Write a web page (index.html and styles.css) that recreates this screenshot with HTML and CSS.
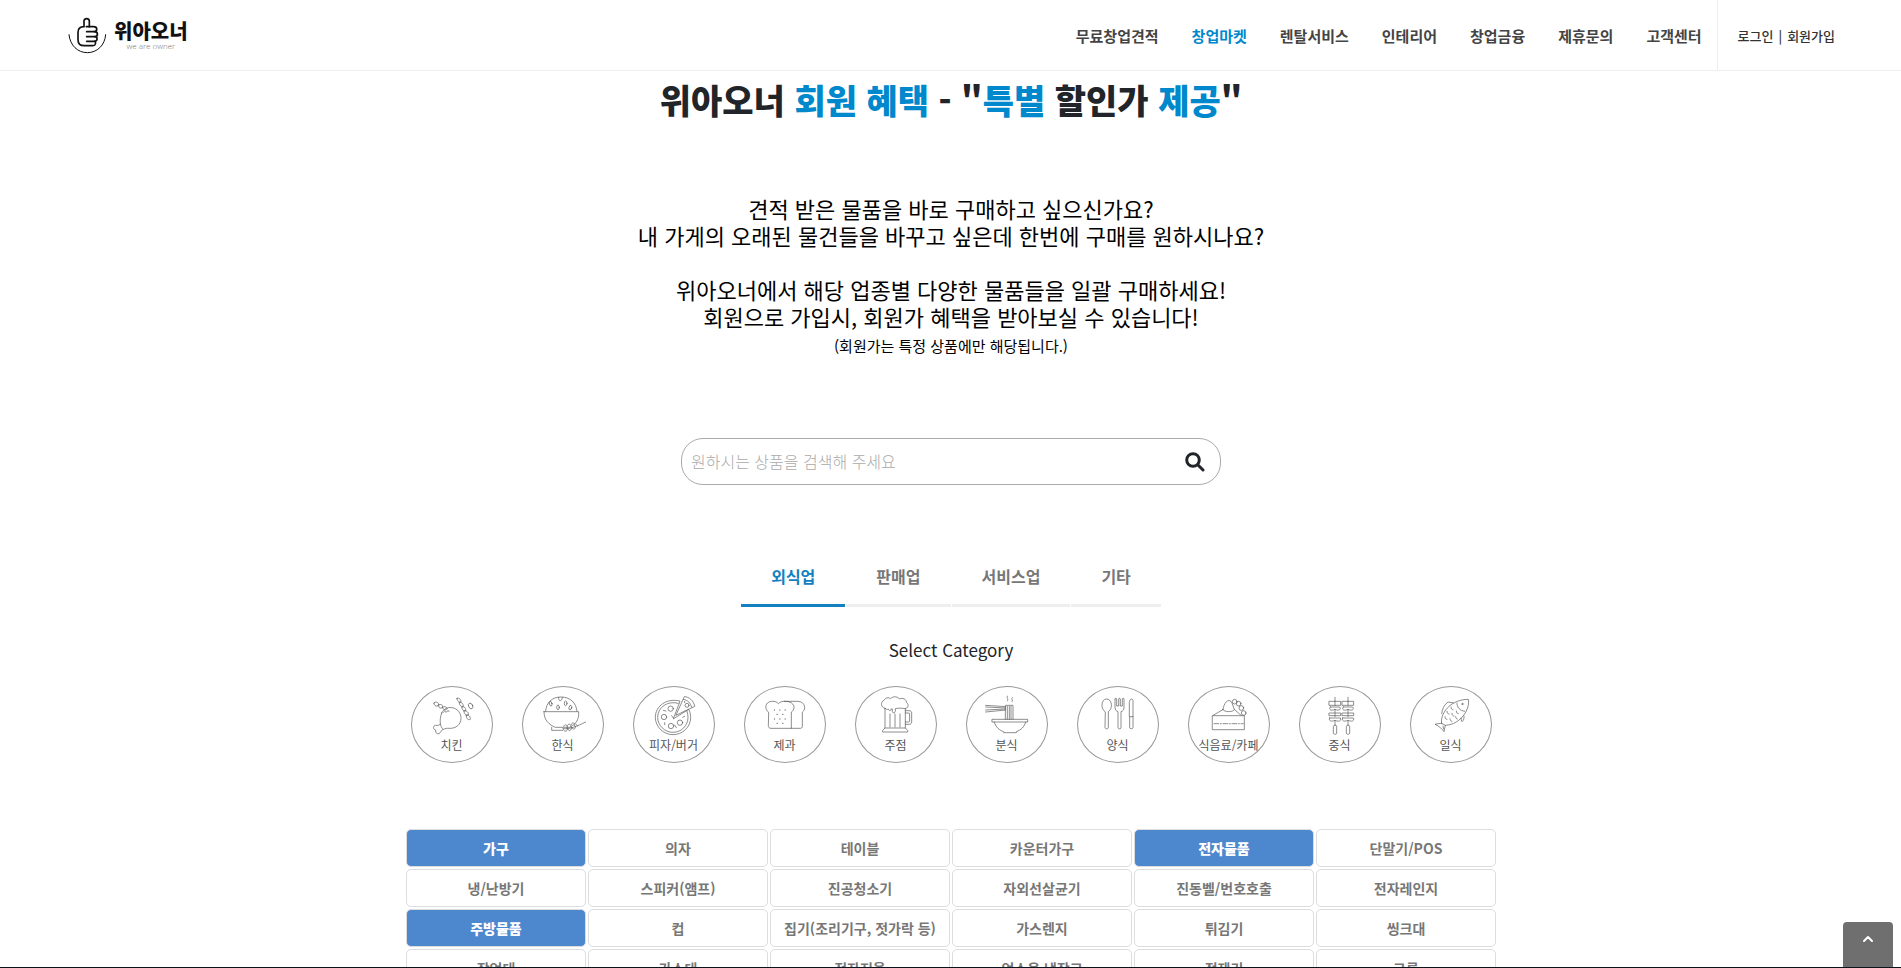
FILE: index.html
```html
<!DOCTYPE html>
<html lang="ko">
<head>
  <meta charset="UTF-8">
  <meta name="viewport" content="width=device-width, initial-scale=1.0">
  <title>위아오너 - 창업마켓</title>
  <link rel="stylesheet" href="styles.css">
</head>
<body>
  <header class="header">
    <a class="logo" href="#">
      <svg class="logo-mark" viewBox="55 50 117 111" aria-hidden="true">
        <path class="arc" d="M58 103c3 32 26 54 55 54s53-22 55-54"/>
        <path d="M103 79V63c0-11 16-11 16 0v16h13c12 0 12 14 2 15 12 0 12 14 2 15 9 1 8 13-1 14 5 3 3 13-5 13h-26c-13 0-19-8-19-18V96c0-11 6-17 18-17z"/>
        <path d="M134 94h-23M136 109h-25M135 123h-24M119 79h-9"/>
      </svg>
      <span class="logo-text">
        <strong>위아오너</strong>
        <small>we are owner</small>
      </span>
    </a>
    <nav class="nav">
      <a href="#">무료창업견적</a>
      <a class="active" href="#">창업마켓</a>
      <a href="#">렌탈서비스</a>
      <a href="#">인테리어</a>
      <a href="#">창업금융</a>
      <a href="#">제휴문의</a>
      <a href="#">고객센터</a>
    </nav>
    <div class="user-menu">
      <a href="#">로그인</a><span>|</span><a href="#">회원가입</a>
    </div>
  </header>

  <main class="main">
    <h1 class="title">위아오너 <em>회원 혜택</em> - "<em>특별</em> 할인가 <em>제공</em>"</h1>

    <div class="intro">
      <p>견적 받은 물품을 바로 구매하고 싶으신가요?<br>내 가게의 오래된 물건들을 바꾸고 싶은데 한번에 구매를 원하시나요?</p>
      <p>위아오너에서 해당 업종별 다양한 물품들을 일괄 구매하세요!<br>회원으로 가입시, 회원가 혜택을 받아보실 수 있습니다!</p>
      <p class="note">(회원가는 특정 상품에만 해당됩니다.)</p>
    </div>

    <form class="search">
      <input type="text" placeholder="원하시는 상품을 검색해 주세요" aria-label="상품 검색">
      <button type="button" aria-label="검색">
        <svg viewBox="0 0 20 20" aria-hidden="true"><circle cx="8" cy="8" r="6.3"/><path d="M13 13l5 5"/></svg>
      </button>
    </form>

    <div class="tabs">
      <button class="tab active" type="button">외식업</button>
      <button class="tab" type="button">판매업</button>
      <button class="tab" type="button">서비스업</button>
      <button class="tab" type="button">기타</button>
    </div>

    <h2 class="subtitle">Select Category</h2>

    <div class="categories">
      <a class="category" href="#">
        <!-- 닭다리 -->
        <svg viewBox="-69 0 138 126" aria-hidden="true">
          <path d="M-31 57C-24 44-14 39 0 41c16 2 27 16 27 32C27 92 11 104-8 103c-8 0-12-1-18 4-10-9-13-27-5-50z"/>
          <path d="M-35 90c-6 6-9 4-14 4-9 1-8 13 0 14-1 9 4 13 10 11 6-3 4-9 12-13"/>
          <path d="M-54 27c5-6 14-2 14 5-3 8-15 5-14-5zM-40 33c6-4 12-1 12 6-4 7-14 3-12-6zM-28 40c6-5 12-1 14 4-6 6-14 4-14-4zM-26 55c3-6 9-5 8 0M-15 53c1-5 6-5 6 0"/>
          <path d="M15 13c6-3 12 3 12 11-7 2-12-4-12-11zM22 26c7-3 12 3 12 11-8 2-12-4-12-11zM30 39c7-3 12 3 11 11-7 2-12-4-11-11zM36 51c7-3 14 3 13 12-8 2-13-4-13-12zM43 64c7-3 13 4 12 12-8 4-13-5-12-12z"/>
          <ellipse cx="56" cy="36" rx="6" ry="9" transform="rotate(-25 56 36)"/>
        </svg>
        <span>치킨</span>
      </a>
      <a class="category" href="#">
        <!-- 밥그릇 -->
        <svg viewBox="-69 0 138 126" aria-hidden="true">
          <path d="M-57 53H47c2 26-11 39-27 47h-43c-19-8-34-21-34-47zM-52 52c1-26 19-43 46-43s46 17 48 43M-34 100v9h33"/>
          <path d="M-13 10c-2 14 11 14 11 0"/>
          <ellipse cx="-37" cy="29" rx="4" ry="7" transform="rotate(-15 -37 29)"/>
          <ellipse cx="-15" cy="40" rx="4" ry="7"/>
          <ellipse cx="8" cy="28" rx="4" ry="7"/>
          <ellipse cx="22" cy="41" rx="4" ry="7" transform="rotate(15 22 41)"/>
          <path d="M0 104c20 2 40-6 68-20M2 97c3-8 12-6 11 5M13 96c2-9 12-7 11 3M25 92c2-9 11-7 10 3M1 105c1 9 12 10 12-1M14 103c1 10 12 9 11-1M26 100c3 9 13 6 11-3M38 90l6 6"/>
        </svg>
        <span>한식</span>
      </a>
      <a class="category" href="#">
        <!-- 피자 -->
        <svg viewBox="-69 0 138 126" aria-hidden="true">
          <path d="M17 21C-20 11-56 35-56 70c0 28 24 52 53 52s53-23 53-52c0-9-2-17-6-24L-1 74z"/>
          <path d="M13 28C-18 19-49 39-49 70c0 24 21 45 46 45s45-20 45-45c0-6-1-12-3-18"/>
          <path d="M6 63L31 8c14 0 28 12 31 28zM28 16c13 2 22 11 25 24"/>
          <circle cx="-10" cy="44" r="8"/><circle cx="-30" cy="69" r="8"/><circle cx="-9" cy="96" r="8"/><circle cx="18" cy="86" r="8"/><circle cx="39" cy="34" r="6"/>
          <path d="M-32 49l8 2M-28 86v6M2 93l5 8M26 70l6-3M-7 65l5 7M32 22v4"/>
        </svg>
        <span>피자/버거</span>
      </a>
      <a class="category" href="#">
        <!-- 식빵 -->
        <svg viewBox="-69 0 138 126" aria-hidden="true">
          <path d="M-50 54c-12-7-11-31 10-32 9-1 16 2 20 7 5-5 12-8 22-7 28 1 31 23 17 32v49h-61c-5 0-8-3-8-7z"/>
          <path d="M-2 22h41c22 1 25 25 13 32v44c0 3-3 5-6 5H19"/>
          <path class="dots" d="M-32 48h1M-16 48h1M0 48h1M-24 61h1M-7 61h1M-32 75h1M-16 75h1M0 75h1M-24 88h1M-7 88h1"/>
        </svg>
        <span>제과</span>
      </a>
      <a class="category" href="#">
        <!-- 맥주잔 -->
        <svg viewBox="-69 0 138 126" aria-hidden="true">
          <path d="M-33 43c-13-2-14-19-3-24 4-8 13-10 20-5 7-9 23-6 26 1 10-5 22 1 21 10 10 7 4 19-4 19-10-2-21-2-29 0v8c-1 6-9 6-9 0v-7h-4c0 7-7 5-8 0-4 2-8 1-10-2z"/>
          <path d="M-33 44v58l-7 7v5h75v-5l-7-7V44M-33 102h61M28 50h12c4 0 7 3 7 7v27c0 4-3 7-7 7H28M28 57h10c2 0 3 1 3 3v21c0 2-1 3-3 3H28"/>
          <path d="M-18 60v39M-3 60v39M12 60v39"/>
        </svg>
        <span>주점</span>
      </a>
      <a class="category" href="#">
        <!-- 국수 -->
        <svg viewBox="-69 0 138 126" aria-hidden="true">
          <path d="M-44 76H62v8H-44zM-38 84c4 16 16 25 28 29v3h38v-3c14-5 24-14 28-29"/>
          <path d="M-5 76V34h23v42M1 76V37M7 76V37M12 76V37"/>
          <path d="M-64 34l60 4M-64 39l60 3M-64 54l60-6M-64 48l60-3M2 6c-7 5 5 7-1 15M16 11c-6 4 4 6-1 12"/>
        </svg>
        <span>분식</span>
      </a>
      <a class="category" href="#">
        <!-- 수저 -->
        <svg viewBox="-69 0 138 126" aria-hidden="true">
          <path d="M-39 53c-14-8-12-38 5-38s19 30 5 38v48c0 5-10 5-10 0z"/>
          <path d="M-9 15v24c0 9 4 12 9 14v48c0 5 9 5 9 0V53c6-2 9-5 9-14V15c0-3-5-3-5 0v21H7V15c0-3-5-3-5 0v21h-6V15c0-3-5-3-5 0"/>
          <path d="M34 68V26c0-7 3-11 7-11 3 0 4 3 4 7v79c0 4-10 4-10 0V68h10"/>
        </svg>
        <span>양식</span>
      </a>
      <a class="category" href="#">
        <!-- 케이크 -->
        <svg viewBox="-69 0 138 126" aria-hidden="true">
          <path d="M-49 65h95v42h-95zM-48 64l30-17M16 46l20 18"/>
          <path d="M-18 47c-2-3 7-24 13-26 6-3 12 0 14 6l7 20c-4 8-31 8-34 0z"/>
          <path class="dash" d="M-45 89h88"/>
          <circle cx="17" cy="23" r="7"/><circle cx="29" cy="29" r="7"/><circle cx="37" cy="42" r="7"/><circle cx="44" cy="57" r="7"/>
        </svg>
        <span>식음료/카페</span>
      </a>
      <a class="category" href="#">
        <!-- 홍등 장식 -->
        <svg viewBox="-69 0 138 126" aria-hidden="true">
          <g id="lantern">
            <path d="M-15 10v12M-32 22H2v12h-34zM-15 22v12M-29 39H-1c6 9-4 12-14 7-12 6-20 1-14-7zM-32 57H2v8h-34zM-15 46v22M-31 72H1c5 9-6 12-16 7-10 5-21 2-16-7zM-15 80v15M-20 97c0-5 10-5 10 0v21c0 4-10 4-10 0z"/>
          </g>
          <use href="#lantern" x="39"/>
        </svg>
        <span>중식</span>
      </a>
      <a class="category" href="#">
        <!-- 생선 -->
        <svg viewBox="-69 0 138 126" aria-hidden="true">
          <path d="M-28 88C-34 62-4 16 52 16c6 26-20 75-69 78l-4 19c-5-7-14-17-27-22 9-3 15-2 20-3z"/>
          <path d="M-28 59c1-14 8-27 19-35l17 3M39 66c1 7-1 13-6 17-2-3-2-7-3-11M18 27c-1 12 8 23 23 25M-28 88l11 6M-22 105l-2-9"/>
          <path d="M0 39c0 6 3 8 6 8M-12 52c0 6 3 8 6 8M3 58c0 6 3 8 6 8M16 51c0 6 3 8 6 8M-18 68c0 6 3 8 6 8M-3 74c0 6 3 8 6 8M14 68c0 5 2 7 5 7"/>
          <circle cx="34" cy="30" r="2"/>
        </svg>
        <span>일식</span>
      </a>
    </div>

    <div class="items">
      <button class="item head" type="button">가구</button>
      <button class="item" type="button">의자</button>
      <button class="item" type="button">테이블</button>
      <button class="item" type="button">카운터가구</button>
      <button class="item head" type="button">전자물품</button>
      <button class="item" type="button">단말기/POS</button>
      <button class="item" type="button">냉/난방기</button>
      <button class="item" type="button">스피커(앰프)</button>
      <button class="item" type="button">진공청소기</button>
      <button class="item" type="button">자외선살균기</button>
      <button class="item" type="button">진동벨/번호호출</button>
      <button class="item" type="button">전자레인지</button>
      <button class="item head" type="button">주방물품</button>
      <button class="item" type="button">컵</button>
      <button class="item" type="button">집기(조리기구, 젓가락 등)</button>
      <button class="item" type="button">가스렌지</button>
      <button class="item" type="button">튀김기</button>
      <button class="item" type="button">씽크대</button>
      <button class="item" type="button">작업대</button>
      <button class="item" type="button">가스대</button>
      <button class="item" type="button">전자저울</button>
      <button class="item" type="button">업소용 냉장고</button>
      <button class="item" type="button">정제기</button>
      <button class="item" type="button">그릇</button>
    </div>
  </main>

  <button class="to-top" type="button" aria-label="맨 위로">
    <svg viewBox="0 0 10 8" aria-hidden="true"><path d="M1 6l4-4 4 4"/></svg>
  </button>
</body>
</html>
```

FILE: styles.css
```css
* {
  box-sizing: border-box;
}
body {
  margin: 0;
  height: 100vh;
  overflow: hidden;
  border-bottom: 1px solid #0b141c;
  background: #fff;
  color: #212529;
  font-family: "Noto Sans CJK KR", "Noto Sans", sans-serif;
}
a {
  color: inherit;
  text-decoration: none;
}
button,
input {
  font-family: inherit;
}
svg {
  fill: none;
  stroke: currentColor;
  stroke-linecap: round;
  stroke-linejoin: round;
}

/* header */
.header {
  display: flex;
  align-items: center;
  height: 71px;
  padding: 0 66px 0 68px;
  border-bottom: 1px solid #eee;
}
.logo {
  display: flex;
  align-items: center;
  gap: 7px;
  color: #111;
}
.logo-mark {
  width: 39px;
  height: 37px;
  stroke-width: 5;
}
.logo-mark .arc {
  stroke-width: 3;
}
.logo-text {
  display: flex;
  flex-direction: column;
  align-items: center;
}
.logo-text strong {
  font-size: 20px;
  font-weight: 900;
  line-height: 22px;
}
.logo-text small {
  color: #777;
  font-family: "Open Sans", sans-serif;
  font-size: 8px;
  font-weight: 300;
  line-height: 8px;
}
.nav {
  display: flex;
  gap: 33px;
  margin-left: auto;
  padding-right: 15px;
  color: #444;
  font-size: 15px;
  font-weight: 700;
}
.nav .active {
  color: #0088cc;
}
.user-menu {
  display: flex;
  align-items: center;
  gap: 5px;
  height: 70px;
  padding-left: 20px;
  border-left: 1px solid #eee;
  color: #333;
  font-size: 13px;
  font-weight: 500;
}

/* intro */
.main {
  display: flex;
  flex-direction: column;
  align-items: center;
  padding: 11px 0 0 1px;
}
.title {
  margin: 0;
  font-size: 34px;
  font-weight: 900;
  line-height: 36px;
}
.title em {
  color: #0088cc;
  font-style: normal;
}
.intro {
  margin-top: 77px;
  color: #000;
  font-size: 22px;
  line-height: 27px;
  text-align: center;
}
.intro p {
  margin: 0 0 27px;
}
.intro .note {
  margin: -27px 0 0;
  font-size: 15px;
  line-height: 32px;
}

/* search */
.search {
  display: flex;
  align-items: center;
  width: 540px;
  height: 47px;
  margin-top: 76px;
  padding: 0 15px 0 9px;
  border: 1px solid #aaa;
  border-radius: 22px;
}
.search input {
  flex: 1;
  padding: 0 0 2px;
  border: 0;
  outline: 0;
  background: none;
  font-size: 16px;
}
.search input::placeholder {
  color: #aaa;
  font-weight: 300;
}
.search button {
  display: flex;
  padding: 0;
  border: 0;
  background: none;
  color: #212529;
}
.search svg {
  width: 20px;
  height: 20px;
  stroke-width: 3;
}

/* tabs */
.tabs {
  display: flex;
  gap: 1px;
  margin-top: 63px;
}
.tab {
  padding: 15px 30px;
  border: 0;
  border-bottom: 3px solid #eee;
  background: none;
  color: #777;
  font-size: 16px;
  font-weight: 700;
  line-height: 26px;
}
.tab.active {
  border-color: #1480c0;
  color: #1480c0;
}
.subtitle {
  margin: 29px 0 0;
  font-size: 17px;
  font-weight: 400;
  line-height: 28px;
}

/* categories */
.categories {
  display: flex;
  gap: 29px;
  margin-top: 22px;
}
.category {
  display: flex;
  flex-direction: column;
  align-items: center;
  width: 82px;
  height: 77px;
  padding-top: 7px;
  border: 1px solid #999;
  border-radius: 50%;
  color: #555;
  font-size: 12px;
  line-height: 18px;
  white-space: nowrap;
}
.category svg {
  flex: none;
  width: 46px;
  height: 42px;
  stroke-width: 2;
}
.category .dots {
  stroke-width: 3;
}
.category .dash {
  stroke-dasharray: 14 5 3 5;
}

/* items */
.items {
  display: grid;
  grid-template-columns: repeat(6, 1fr);
  gap: 2px;
  width: 1090px;
  margin-top: 66px;
}
.item {
  height: 38px;
  padding: 0;
  border: 1px solid #ddd;
  border-radius: 5px;
  background: #fff;
  color: #777;
  font-size: 14px;
  font-weight: 700;
}
.item.head {
  background: #4d88cf;
  color: #fff;
  font-weight: 900;
}

.to-top {
  position: fixed;
  right: 8px;
  bottom: 1px;
  display: flex;
  justify-content: center;
  width: 50px;
  height: 45px;
  padding: 13px 0 0;
  border: 0;
  border-radius: 4px 4px 0 0;
  background: #6f6f6f;
  color: #fff;
}
.to-top svg {
  width: 10px;
  height: 8px;
  stroke-width: 2;
}
```
